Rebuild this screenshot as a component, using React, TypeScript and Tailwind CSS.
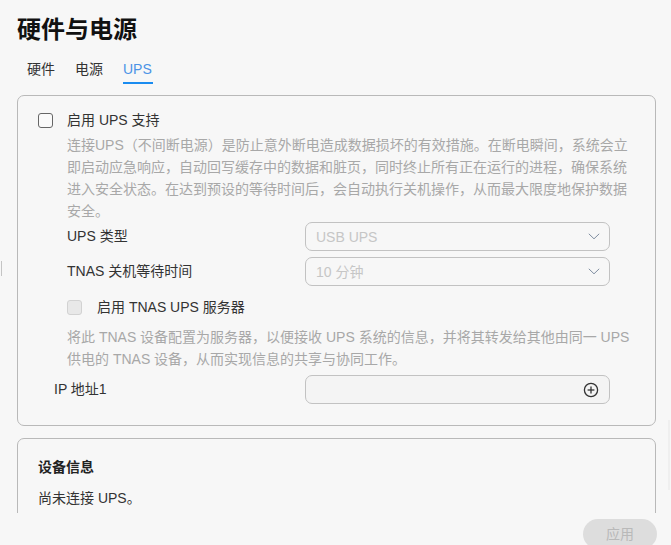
import React from "react";

const FONT = { fontFamily: '"Liberation Sans", "Noto Sans CJK SC", sans-serif' };

function Chevron() {
  return (
    <svg width="12" height="7" viewBox="0 0 12 7" fill="none">
      <polyline points="0.8,0.8 6,5.8 11.2,0.8" stroke="#7f8da0" strokeWidth="1" fill="none" />
    </svg>
  );
}

function PlusCircle() {
  return (
    <svg width="16" height="16" viewBox="0 0 16 16" fill="none">
      <circle cx="8" cy="8" r="6.6" stroke="#333" strokeWidth="1.3" />
      <line x1="8" y1="4.6" x2="8" y2="11.4" stroke="#333" strokeWidth="1.3" />
      <line x1="4.6" y1="8" x2="11.4" y2="8" stroke="#333" strokeWidth="1.3" />
    </svg>
  );
}

function Select({ value }: { value: string }) {
  return (
    <div className="w-[305px] h-[29px] border border-[#c2c2c2] rounded-[7px] bg-[#f7f7f7] flex items-center justify-between pl-[10px] pr-[9px]">
      <span className="text-[14px] text-[#c6c6c6] leading-none">{value}</span>
      <Chevron />
    </div>
  );
}

export default function App() {
  return (
    <div className="w-[671px] h-[545px] bg-[#f7f7f7] relative overflow-hidden text-[#333]" style={FONT}>
      {/* title */}
      <div className="pt-[12px] pl-[17px] h-[48px]">
        <div className="text-[24px] font-bold leading-[36px] text-[#111]">硬件与电源</div>
      </div>
      {/* tabs */}
      <div className="mt-[10px] pl-[27px] flex gap-[20px] text-[14px]">
        <div className="leading-[22px] pb-[4px]">硬件</div>
        <div className="leading-[22px] pb-[4px]">电源</div>
        <div className="flex flex-col">
          <div className="leading-[22px] text-[#4b93e6]">UPS</div>
          <div className="mt-[2px] h-[2px] bg-[#1a8cf0] w-[30px]"></div>
        </div>
      </div>

      {/* scroll area */}
      <div className="mt-[11px] h-[418px] overflow-hidden pl-[17px] pr-[15px]">
        <div className="border border-[#b9b9b9] rounded-[7px] pt-[13px] pb-[21px] pl-[20px]">
          <div className="flex items-center h-[22px]">
            <div className="w-[15px] h-[15px] border-[1.5px] border-[#666] rounded-[3px] bg-[#fafafa]"></div>
            <span className="ml-[14px] text-[14px] leading-[22px] text-[#333]">启用 UPS 支持</span>
          </div>
          <div className="mt-[3px] ml-[29px] text-[14px] leading-[22px] text-[#a8a8a8] whitespace-nowrap">
            <div>连接UPS（不间断电源）是防止意外断电造成数据损坏的有效措施。在断电瞬间，系统会立</div>
            <div>即启动应急响应，自动回写缓存中的数据和脏页，同时终止所有正在运行的进程，确保系统</div>
            <div>进入安全状态。在达到预设的等待时间后，会自动执行关机操作，从而最大限度地保护数据</div>
            <div>安全。</div>
          </div>
          <div className="flex items-center ml-[29px]">
            <div className="w-[238px] text-[14px] text-[#333]">UPS 类型</div>
            <Select value="USB UPS" />
          </div>
          <div className="flex items-center ml-[29px] mt-[6px]">
            <div className="w-[238px] text-[14px] text-[#333]">TNAS 关机等待时间</div>
            <Select value="10 分钟" />
          </div>
          <div className="flex items-center h-[22px] mt-[10px] ml-[29px]">
            <div className="w-[15px] h-[15px] border border-[#d2d2d2] rounded-[3px] bg-[#e8e8e8]"></div>
            <span className="ml-[15px] text-[14px] leading-[22px] text-[#333]">启用 TNAS UPS 服务器</span>
          </div>
          <div className="mt-[8px] ml-[29px] text-[14px] leading-[22px] text-[#a8a8a8] whitespace-nowrap">
            <div>将此 TNAS 设备配置为服务器，以便接收 UPS 系统的信息，并将其转发给其他由同一 UPS</div>
            <div>供电的 TNAS 设备，从而实现信息的共享与协同工作。</div>
          </div>
          <div className="flex items-center ml-[16px] mt-[5px]">
            <div className="w-[251px] text-[14px] text-[#333]">IP 地址1</div>
            <div className="w-[305px] h-[29px] border border-[#c2c2c2] rounded-[7px] bg-[#f4f4f4] flex items-center justify-end pr-[10px]">
              <PlusCircle />
            </div>
          </div>
        </div>

        <div className="mt-[12px] border border-[#b9b9b9] rounded-[7px] pt-[17px] pl-[20px] h-[200px]">
          <div className="text-[14px] leading-[22px] font-bold text-[#222]">设备信息</div>
          <div className="mt-[9px] text-[14px] leading-[22px] text-[#333]">尚未连接 UPS。</div>
        </div>
      </div>

      {/* footer */}
      <div className="flex justify-end pr-[14px] pt-[6px]">
        <div className="w-[74px] h-[30px] rounded-full bg-[#dddddd] flex items-center justify-center text-[14px] text-[#b9b9b9]">应用</div>
      </div>

      {/* overlay markers */}
      <div className="absolute left-[1px] top-[261px] w-[1px] h-[15px] bg-[#c4c4c4]"></div>
      <div className="absolute left-[668px] top-[420px] w-[2px] h-[70px] bg-[#efefef]"></div>
    </div>
  );
}
